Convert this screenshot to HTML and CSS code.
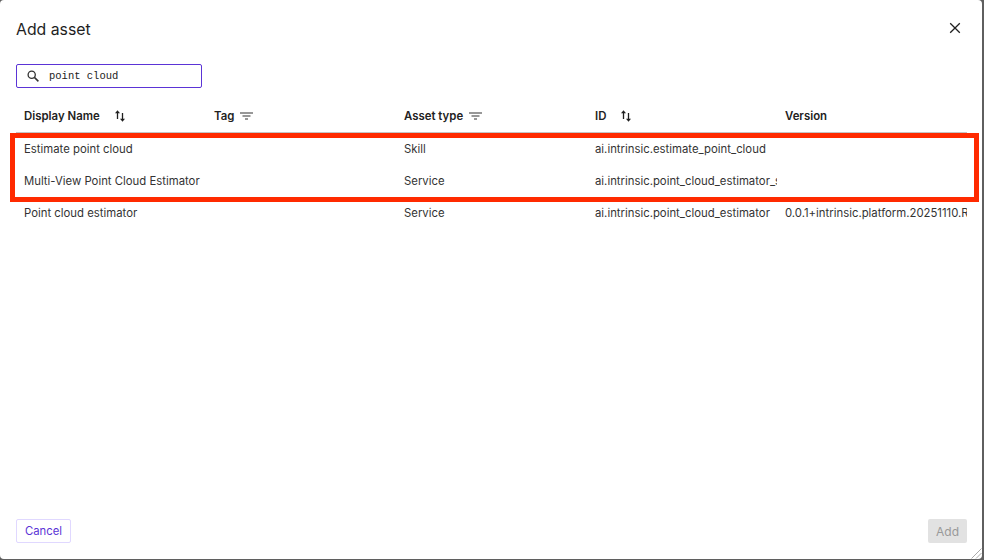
FILE: index.html
```html
<!DOCTYPE html>
<html lang="en">
<head>
<meta charset="utf-8">
<title>Add asset</title>
<link rel="stylesheet" href="styles.css">
</head>
<body>
<div class="dialog">
  <header class="head">
    <h1 class="title">Add asset</h1>
    <button class="close" aria-label="Close">
      <svg width="12" height="12" viewBox="0 0 12 12"><path d="M1.200 1.200l9.600 9.600M10.800 1.200l-9.600 9.600" fill="none" stroke="#1f1f1f" stroke-width="1.300"/></svg>
    </button>
  </header>
  <div class="search">
    <svg class="search-icon" width="12" height="12" viewBox="0 0 12 12"><circle cx="4.700" cy="4.700" r="3.600" fill="none" stroke="#333" stroke-width="1.300"/><path d="M7.400 7.400l4 4" stroke="#333" stroke-width="1.500" fill="none"/></svg>
    <span class="search-text">point cloud</span>
  </div>
  <div class="table">
    <div class="row header">
      <div class="cell c1">Display Name<svg class="sort" width="10" height="12" viewBox="0 0 10 12"><path d="M2.500 9V2" stroke="#1f1f1f" stroke-width="1.300" fill="none"/><path d="M0 3.200L2.500 0.300 5 3.200z" fill="#1f1f1f"/><path d="M7.500 3v7" stroke="#1f1f1f" stroke-width="1.300" fill="none"/><path d="M5 8.800L7.500 11.700 10 8.800z" fill="#1f1f1f"/></svg></div>
      <div class="cell c2">Tag<svg class="filter" width="13" height="8" viewBox="0 0 13 8"><path d="M0 1h13M2.500 4h8M5 7h3" stroke="#333" stroke-width="1.100" fill="none"/></svg></div>
      <div class="cell c3">Asset type<svg class="filter" width="13" height="8" viewBox="0 0 13 8"><path d="M0 1h13M2.500 4h8M5 7h3" stroke="#333" stroke-width="1.100" fill="none"/></svg></div>
      <div class="cell c4">ID<svg class="sort" width="10" height="12" viewBox="0 0 10 12"><path d="M2.500 9V2" stroke="#1f1f1f" stroke-width="1.300" fill="none"/><path d="M0 3.200L2.500 0.300 5 3.200z" fill="#1f1f1f"/><path d="M7.500 3v7" stroke="#1f1f1f" stroke-width="1.300" fill="none"/><path d="M5 8.800L7.500 11.700 10 8.800z" fill="#1f1f1f"/></svg></div>
      <div class="cell c5">Version</div>
    </div>
    <div class="row">
      <div class="cell c1">Estimate point cloud</div><div class="cell c2"></div><div class="cell c3">Skill</div><div class="cell c4"><span class="clip">ai.intrinsic.estimate_point_cloud</span></div><div class="cell c5"></div>
    </div>
    <div class="row">
      <div class="cell c1">Multi-View Point Cloud Estimator</div><div class="cell c2"></div><div class="cell c3">Service</div><div class="cell c4"><span class="clip">ai.intrinsic.point_cloud_estimator_service</span></div><div class="cell c5"></div>
    </div>
    <div class="row">
      <div class="cell c1">Point cloud estimator</div><div class="cell c2"></div><div class="cell c3">Service</div><div class="cell c4"><span class="clip">ai.intrinsic.point_cloud_estimator</span></div><div class="cell c5">0.0.1+intrinsic.platform.20251110.RC00</div>
    </div>
    <div class="highlight"></div>
  </div>
  <footer class="foot">
    <button class="btn cancel">Cancel</button>
    <button class="btn add">Add</button>
  </footer>
  <svg class="grip" width="11" height="11" viewBox="0 0 11 11"><path d="M0.500 10.500L10.500 0.500M5 10.500L10.500 5" stroke="#aaa" stroke-width="1" fill="none"/></svg>
</div>
</body>
</html>
```

FILE: styles.css
```css
* { box-sizing: border-box; }
html, body { margin: 0; height: 100%; background: #5f5f5f; }
body { font-family: Inter, "Liberation Sans", sans-serif; color: #2b2b2b; overflow: hidden; }
.dialog {
  position: relative;
  width: 982px;
  height: 559px;
  background: #fff;
  border-radius: 4px;
  display: flex;
  flex-direction: column;
  padding: 0 15px 0 16px;
}
.head { display: flex; align-items: center; justify-content: space-between; height: 56px; }
.title { margin: 2px 0 0; font-size: 15.800px; font-weight: 400; color: #1f1f1f; }
.close { width: 12px; height: 12px; padding: 0; border: 0; background: none; margin-right: 6px; display: flex; }
.search {
  margin-top: 8px;
  width: 186px;
  height: 24px;
  border: 1px solid #5b34d6;
  border-radius: 2px;
  display: flex;
  align-items: center;
  padding-left: 10px;
}
.search-icon { flex: none; }
.search-text { margin-left: 10px; font-family: "Liberation Mono", "DejaVu Sans Mono", monospace; font-size: 10.500px; color: #222; }
.table { position: relative; margin-top: 11px; }
.row { display: grid; grid-template-columns: 190px 190px 191px 190px 190px; height: 32px; align-items: center; }
.row.header { height: 34px; padding-top: 1px; border-bottom: 1px solid #c4c4c4; }
.cell { padding-left: 8px; font-size: 11.350px; white-space: nowrap; overflow: hidden; color: #333; display: flex; align-items: center; }
.clip { display: block; width: 182px; overflow: hidden; flex: none; }
.header .cell { font-weight: 600; font-size: 11.400px; color: #222; }
.sort { margin-left: 15px; flex: none; }
.filter { margin-left: 6px; flex: none; }
.highlight { position: absolute; left: -6px; top: 34px; width: 969px; height: 69px; border: 5px solid #ff2a00; pointer-events: none; }
.foot { margin-top: auto; display: flex; justify-content: space-between; align-items: center; padding-bottom: 16px; }
.btn { font-family: inherit; font-size: 11.300px; height: 24px; border-radius: 2px; padding: 0; }
.cancel { width: 55px; background: #fff; color: #5b34d6; border: 1px solid #e0d8ff; }
.add { width: 39px; background: #e2e2e2; color: #999; border: 0; font-size: 12px; }
.grip { position: absolute; right: 0; bottom: 0; }
```
